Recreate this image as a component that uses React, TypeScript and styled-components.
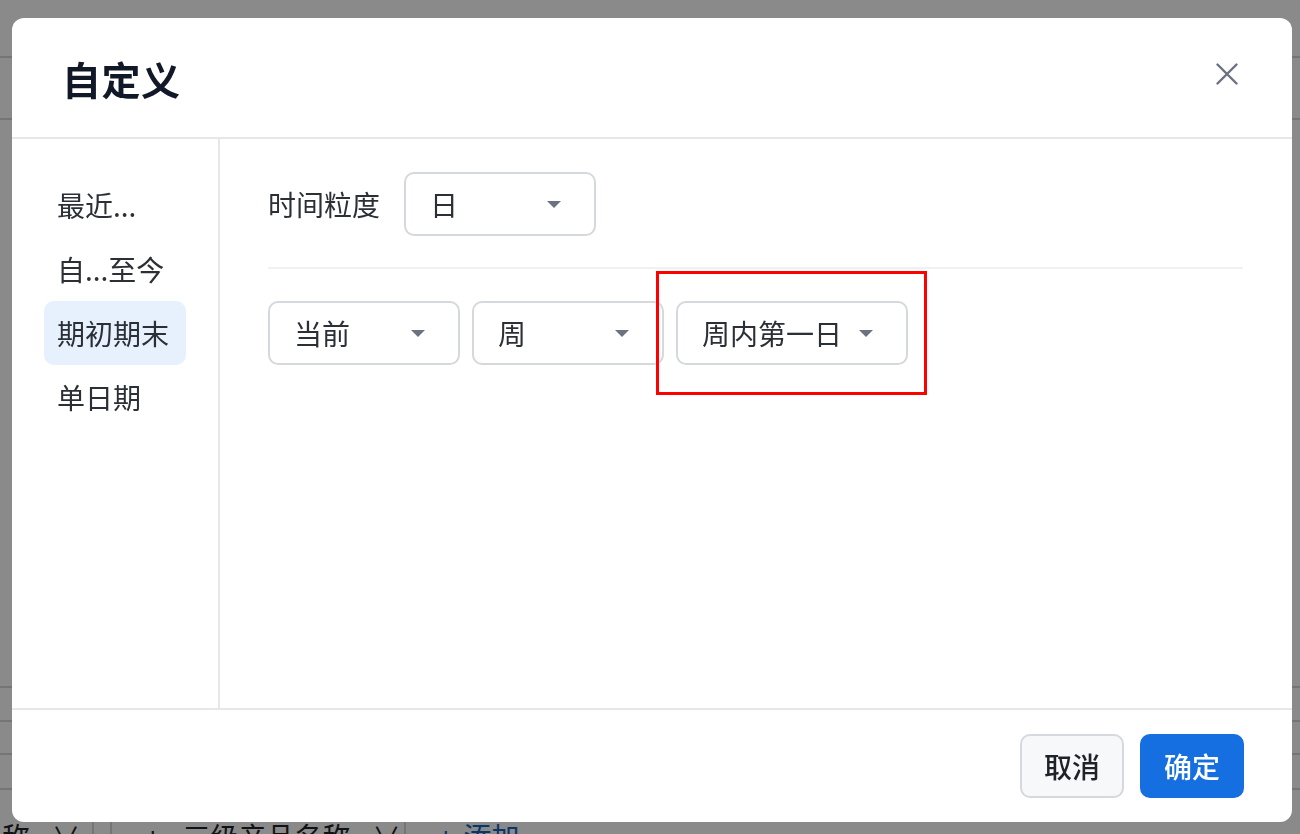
import styled, { createGlobalStyle } from "styled-components";

const GlobalStyle = createGlobalStyle`
  html, body {
    margin: 0;
    padding: 0;
  }
  body {
    font-family: "Noto Sans CJK SC", "Noto Sans", "Liberation Sans", sans-serif;
    background: #ffffff;
  }
`;

/* --- page underneath the dialog --- */

const Page = styled.div`
  height: 834px;
  overflow: hidden;
  display: flex;
  flex-direction: column;
  background: #ffffff;
`;

const PageRow = styled.div<{ $h: number }>`
  height: ${(p) => p.$h}px;
  flex: none;
  border-bottom: 2px solid #d6d8dc;
  box-sizing: border-box;
`;

const PageSpacer = styled.div`
  flex: 1;
`;

const FieldBar = styled.div`
  flex: none;
  height: 44px;
  display: flex;
  align-items: stretch;
  font-size: 28px;
  color: #1f2328;
`;

const FieldTag = styled.div<{ $w: number; $pad: number; $offset: number }>`
  width: ${(p) => p.$w}px;
  margin-left: ${(p) => p.$offset}px;
  padding: 26px 0 0 ${(p) => p.$pad}px;
  box-sizing: border-box;
  display: flex;
  gap: 22px;
  border-right: 2px solid #d6d8dc;
  border-left: ${(p) => (p.$offset > 0 ? "2px solid #d6d8dc" : "none")};
  white-space: nowrap;
`;

const AddLink = styled.div`
  padding: 26px 0 0 32px;
  display: flex;
  gap: 10px;
  color: #1565c0;
  white-space: nowrap;
`;

/* --- dialog --- */

const Overlay = styled.div`
  position: fixed;
  inset: 0;
  background: rgba(0, 0, 0, 0.46);
  display: flex;
  padding: 18px 8px 12px 12px;
`;

const Dialog = styled.div`
  flex: 1;
  background: #ffffff;
  border-radius: 12px;
  display: flex;
  flex-direction: column;
  overflow: hidden;
`;

const Header = styled.div`
  height: 121px;
  flex: none;
  box-sizing: border-box;
  display: flex;
  align-items: center;
  justify-content: space-between;
  padding: 0 54px 0 50px;
  border-bottom: 2px solid #e5e7eb;
`;

const Title = styled.h2`
  margin: 0;
  font-size: 39px;
  font-weight: 700;
  color: #111827;
  letter-spacing: 0.5px;
`;

const CloseButton = styled.button`
  border: none;
  background: none;
  padding: 0;
  margin-bottom: 8px;
  width: 22px;
  height: 22px;
  display: flex;
  cursor: pointer;
`;

const Body = styled.div`
  flex: 1;
  display: flex;
  min-height: 0;
`;

const Sidebar = styled.div`
  width: 208px;
  flex: none;
  border-right: 2px solid #e5e7eb;
  padding: 34px 0 0 32px;
  box-sizing: border-box;
  display: flex;
  flex-direction: column;
`;

const NavItem = styled.div<{ $active?: boolean }>`
  width: 142px;
  height: 64px;
  box-sizing: border-box;
  padding: 0 13px;
  display: flex;
  align-items: center;
  border-radius: 10px;
  font-size: 28px;
  color: #2b2f36;
  background: ${(p) => (p.$active ? "#e7f0fd" : "transparent")};
  white-space: nowrap;
`;

const Main = styled.div`
  flex: 1;
  padding: 33px 49px 0 48px;
  display: flex;
  flex-direction: column;
`;

const FieldRow = styled.div`
  display: flex;
  align-items: center;
  gap: 24px;
`;

const Label = styled.span`
  font-size: 28px;
  color: #2b2f36;
`;

const Divider = styled.div`
  height: 2px;
  background: #f0f1f3;
  margin: 31px 0 32px;
`;

const SelectRow = styled.div`
  display: flex;
  gap: 12px;
`;

const Select = styled.div<{ $w: number }>`
  width: ${(p) => p.$w}px;
  height: 64px;
  box-sizing: border-box;
  border: 2px solid #d5d8dd;
  border-radius: 10px;
  padding: 0 33px 0 24px;
  display: flex;
  align-items: center;
  justify-content: space-between;
  font-size: 28px;
  color: #2b2f36;
  background: #ffffff;
`;

const Caret = styled.span`
  width: 0;
  height: 0;
  border-left: 7px solid transparent;
  border-right: 7px solid transparent;
  border-top: 7px solid #6b7280;
`;

const Marked = styled.div`
  position: relative;

  &::after {
    content: "";
    position: absolute;
    left: -20px;
    right: -19px;
    top: -30px;
    bottom: -30px;
    border: 3px solid #ff0000;
    pointer-events: none;
  }
`;

const Footer = styled.div`
  height: 114px;
  flex: none;
  border-top: 2px solid #e5e7eb;
  box-sizing: border-box;
  display: flex;
  align-items: center;
  justify-content: flex-end;
  gap: 16px;
  padding: 0 48px 0 0;
`;

const Button = styled.button<{ $primary?: boolean }>`
  width: 104px;
  height: 64px;
  border-radius: 10px;
  font-family: inherit;
  font-size: 28px;
  font-weight: 500;
  cursor: pointer;
  border: 2px solid ${(p) => (p.$primary ? "#166fe0" : "#d5d8dd")};
  background: ${(p) => (p.$primary ? "#166fe0" : "#f7f8fa")};
  color: ${(p) => (p.$primary ? "#ffffff" : "#1f2328")};
`;

const navItems = ["最近...", "自...至今", "期初期末", "单日期"];

function Dropdown({ value, width }: { value: string; width: number }) {
  return (
    <Select $w={width}>
      <span>{value}</span>
      <Caret />
    </Select>
  );
}

export default function App() {
  return (
    <>
      <GlobalStyle />
      <Page>
        <PageRow $h={58} />
        <PageRow $h={62} />
        <PageSpacer />
        <PageRow $h={33} />
        <PageRow $h={34} />
        <PageRow $h={33} />
        <PageRow $h={35} />
        <FieldBar>
          <FieldTag $w={120} $pad={0} $offset={-26}>
            <span>名称</span>
            <span>∨</span>
          </FieldTag>
          <FieldTag $w={296} $pad={33} $offset={16}>
            <span>+</span>
            <span>三级产品名称</span>
            <span>∨</span>
          </FieldTag>
          <AddLink>
            <span>+</span>
            <span>添加</span>
          </AddLink>
        </FieldBar>
      </Page>

      <Overlay>
        <Dialog>
          <Header>
            <Title>自定义</Title>
            <CloseButton aria-label="关闭">
              <svg width="22" height="22" viewBox="0 0 22 22">
                <path
                  d="M1.5 1.5 L20.5 20.5 M20.5 1.5 L1.5 20.5"
                  stroke="#6b7280"
                  strokeWidth="2.4"
                  strokeLinecap="round"
                />
              </svg>
            </CloseButton>
          </Header>

          <Body>
            <Sidebar>
              {navItems.map((item) => (
                <NavItem key={item} $active={item === "期初期末"}>
                  {item}
                </NavItem>
              ))}
            </Sidebar>

            <Main>
              <FieldRow>
                <Label>时间粒度</Label>
                <Dropdown value="日" width={192} />
              </FieldRow>
              <Divider />
              <SelectRow>
                <Dropdown value="当前" width={192} />
                <Dropdown value="周" width={192} />
                <Marked>
                  <Dropdown value="周内第一日" width={232} />
                </Marked>
              </SelectRow>
            </Main>
          </Body>

          <Footer>
            <Button>取消</Button>
            <Button $primary>确定</Button>
          </Footer>
        </Dialog>
      </Overlay>
    </>
  );
}
